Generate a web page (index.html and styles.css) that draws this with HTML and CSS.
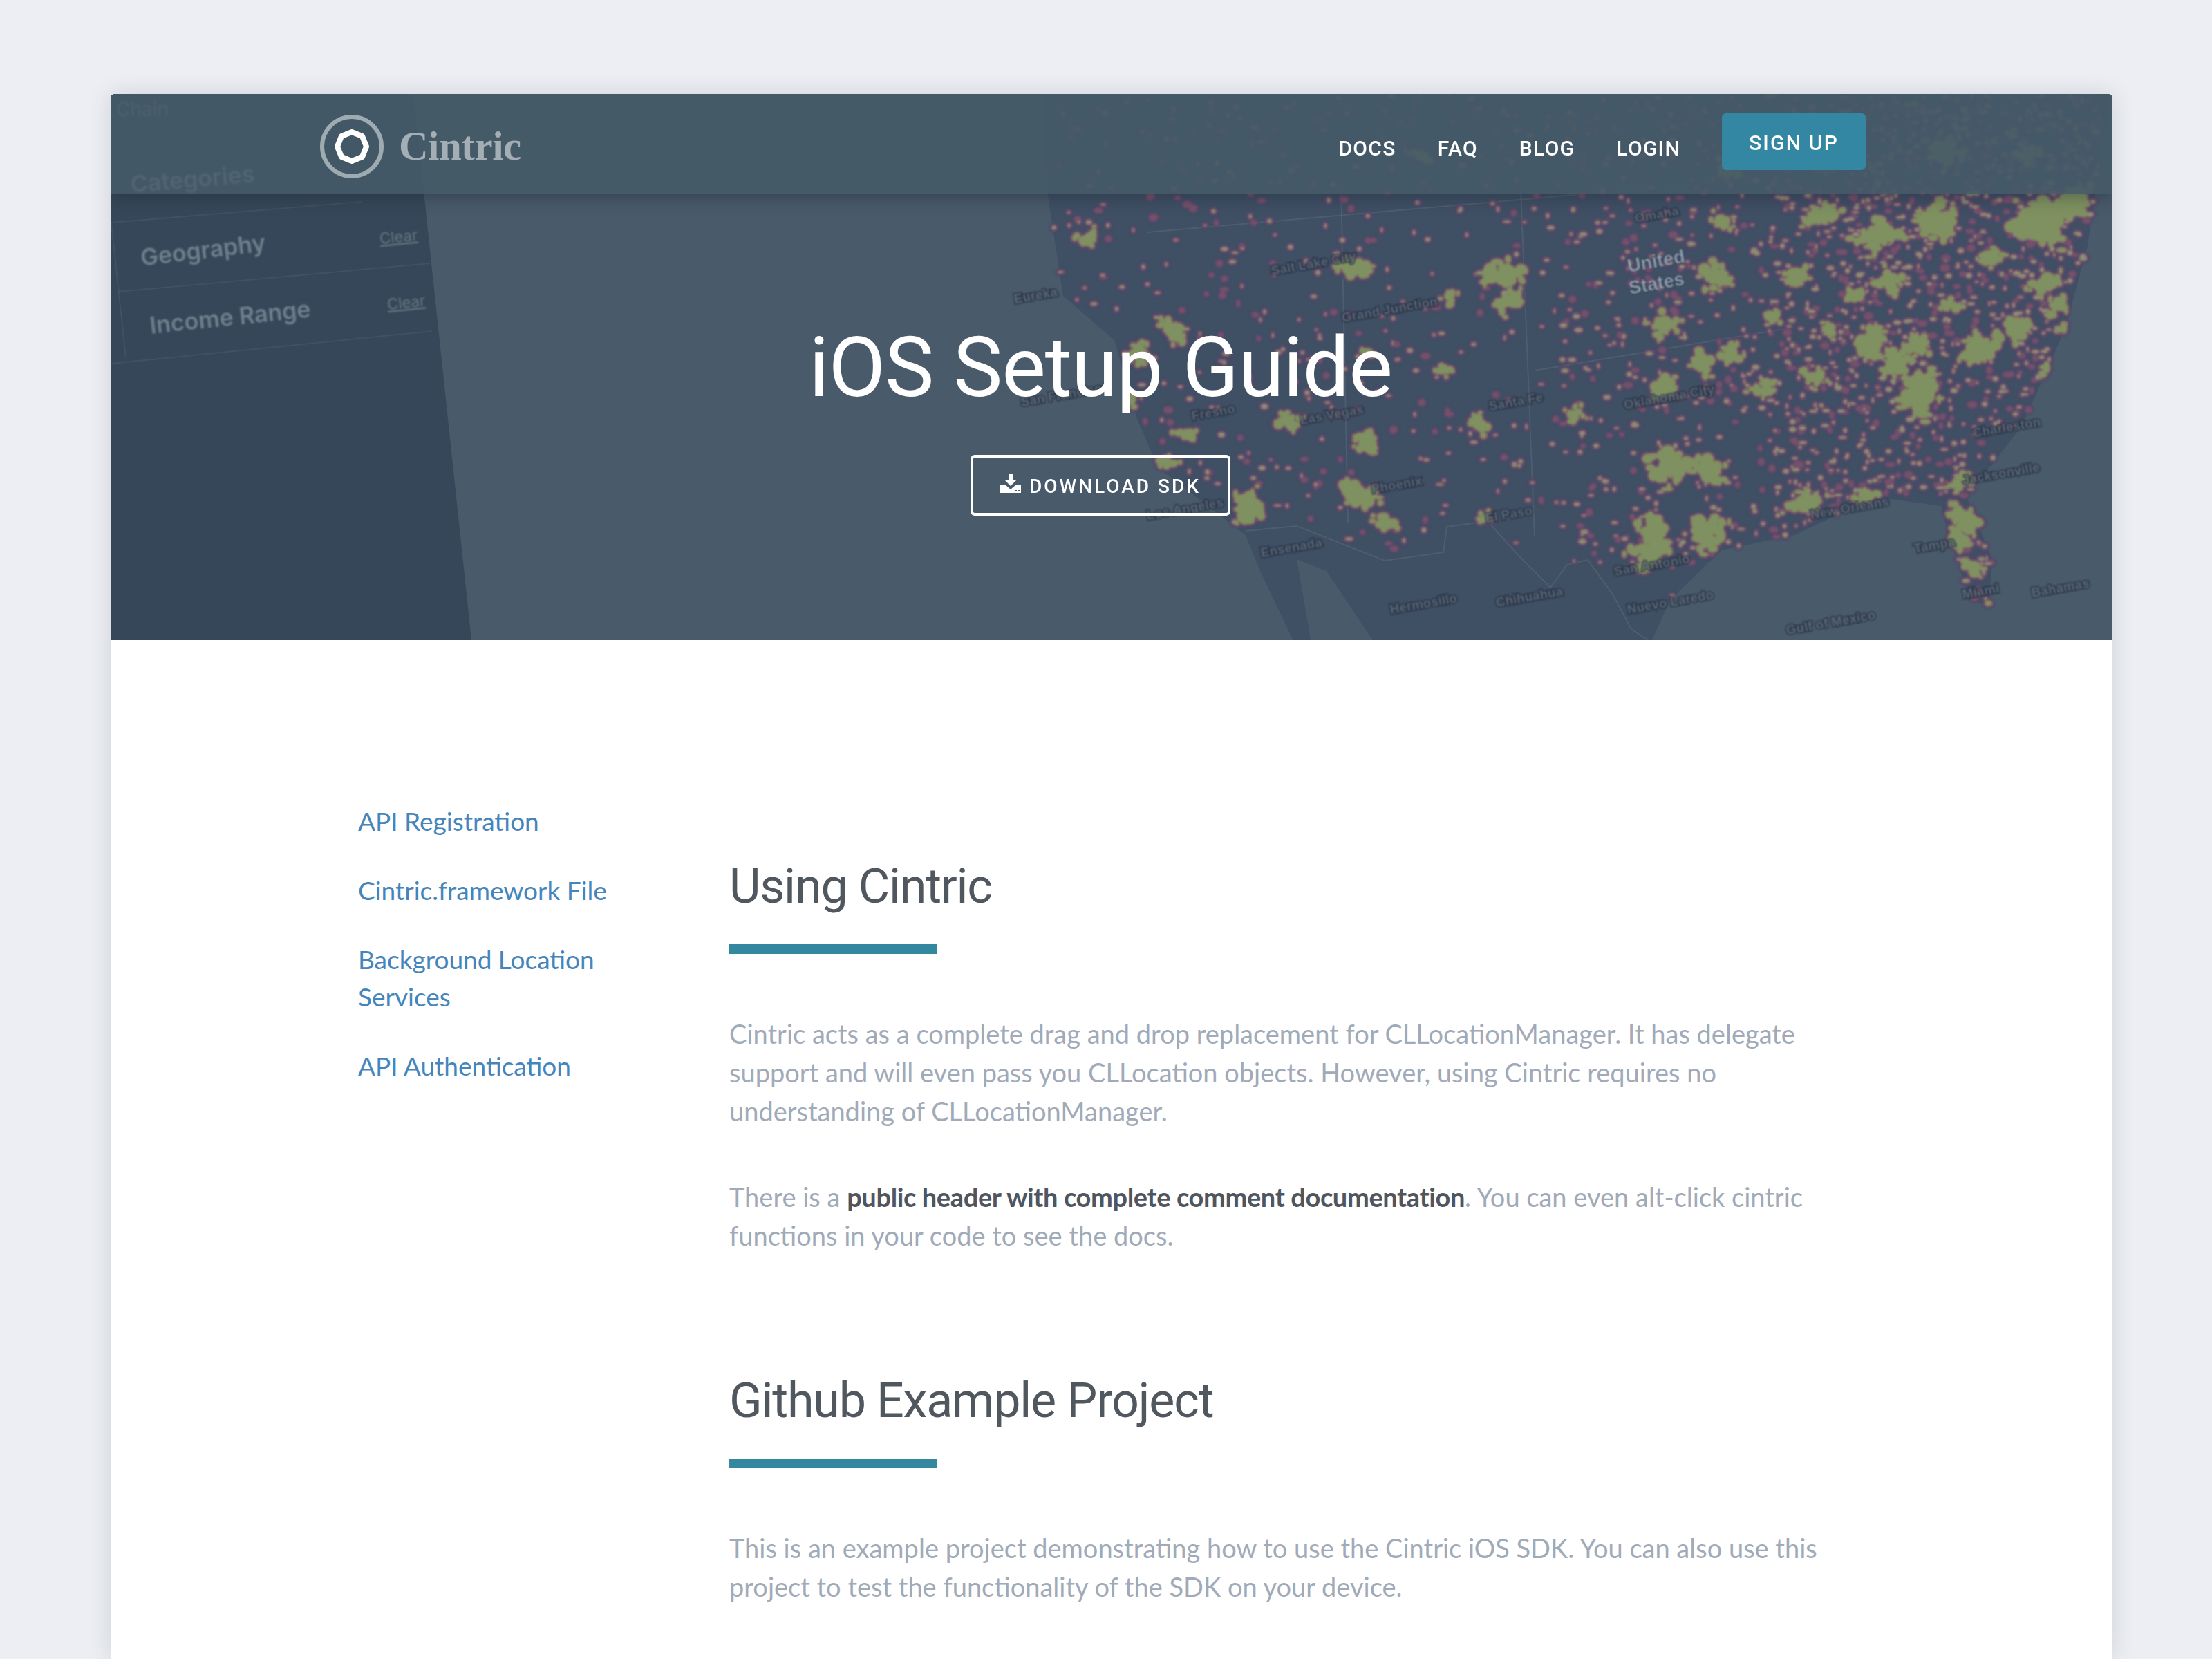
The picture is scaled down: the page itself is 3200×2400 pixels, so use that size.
FILE: index.html
```html
<!DOCTYPE html>
<html lang="en">
<head>
<meta charset="utf-8">
<title>iOS Setup Guide - Cintric</title>
<link rel="stylesheet" href="styles.css">
</head>
<body>
<div class="card">
  <header class="hero">
    <svg class="hero-art" viewBox="0 0 2896 790" width="2896" height="790" aria-hidden="true">
      <rect class="ocean" width="2896" height="790"/>
      <polygon id="land" class="land" points=""/>
      <polygon id="gulf" class="ocean" points=""/>
      <g class="borders">
        <polyline points="1642,632 1716,625 1843,675 1928,663 1933,626 1992,618 2040,671 2083,714 2107,681 2137,674 2173,724 2200,774 2224,790"/>
        <polyline points="1500,200 2300,130"/>
        <polyline points="1780,130 1790,620"/>
        <polyline points="2040,140 2060,640"/>
        <polyline points="2060,400 2420,340"/>
      </g>
      <g id="heat" class="heat"></g>
      <g class="map-labels">
        <text x="1308" y="303" transform="rotate(-10 1308 303)">Eureka</text>
        <text x="1680" y="262" transform="rotate(-10 1680 262)">Salt Lake City</text>
        <text x="1782" y="330" transform="rotate(-10 1782 330)">Grand Junction</text>
        <text x="2206" y="186" transform="rotate(-10 2206 186)">Omaha</text>
        <text class="country" x="2196" y="258" transform="rotate(-10 2196 258)">United</text>
        <text class="country" x="2198" y="290" transform="rotate(-10 2198 290)">States</text>
        <text x="1318" y="452" transform="rotate(-10 1318 452)">San Francisco</text>
        <text x="1565" y="472" transform="rotate(-10 1565 472)">Fresno</text>
        <text x="1722" y="478" transform="rotate(-10 1722 478)">Las Vegas</text>
        <text x="1995" y="458" transform="rotate(-10 1995 458)">Santa Fe</text>
        <text x="2190" y="456" transform="rotate(-10 2190 456)">Oklahoma City</text>
        <text x="1825" y="578" transform="rotate(-10 1825 578)">Phoenix</text>
        <text x="1500" y="616" transform="rotate(-10 1500 616)">Los Angeles</text>
        <text x="1990" y="620" transform="rotate(-10 1990 620)">El Paso</text>
        <text x="1665" y="670" transform="rotate(-10 1665 670)">Ensenada</text>
        <text x="1852" y="752" transform="rotate(-10 1852 752)">Hermosillo</text>
        <text x="2005" y="742" transform="rotate(-10 2005 742)">Chihuahua</text>
        <text x="2195" y="752" transform="rotate(-10 2195 752)">Nuevo Laredo</text>
        <text x="2176" y="697" transform="rotate(-10 2176 697)">San Antonio</text>
        <text x="2460" y="615" transform="rotate(-10 2460 615)">New Orleans</text>
        <text x="2610" y="664" transform="rotate(-10 2610 664)">Tampa</text>
        <text x="2680" y="730" transform="rotate(-10 2680 730)">Miami</text>
        <text x="2780" y="728" transform="rotate(-10 2780 728)">Bahamas</text>
        <text x="2425" y="782" transform="rotate(-10 2425 782)">Gulf of Mexico</text>
        <text x="2695" y="497" transform="rotate(-10 2695 497)">Charleston</text>
        <text x="2680" y="565" transform="rotate(-10 2680 565)">Jacksonville</text>
      </g>
      <polygon class="panel" points="0,0 438,0 522,790 0,790"/>
      <g class="panel-lines">
        <line x1="1" y1="186" x2="363" y2="156"/>
        <line x1="11" y1="286" x2="462" y2="245"/>
        <line x1="1" y1="390" x2="465" y2="343"/>
        <line x1="1" y1="186" x2="22" y2="382"/>
      </g>
      <g class="panel-text">
        <text class="faint" x="8" y="32">Chain</text>
        <text class="ghost" x="30" y="143" transform="rotate(-5 30 143)">Categories</text>
        <text class="group" x="45" y="249" transform="rotate(-7 45 249)">Geography</text>
        <text class="group" x="58" y="347" transform="rotate(-6 58 347)">Income Range</text>
        <text class="clear" x="390" y="217" transform="rotate(-6 390 217)">Clear</text>
        <text class="clear" x="401" y="312" transform="rotate(-6 401 312)">Clear</text>
      </g>
    </svg>

    <nav class="nav">
      <a class="brand" href="#">
        <svg class="brand-mark" viewBox="0 0 96 96" width="96" height="96" aria-hidden="true">
          <circle class="ring-outer" cx="48" cy="48" r="43"/>
          <polygon class="ring-inner" points="48,27 63,33 69,48 63,63 48,69 33,63 27,48 33,33"/>
        </svg>
        <span class="brand-name">Cintric</span>
      </a>
      <div class="nav-links">
        <a class="nav-link" href="#">DOCS</a>
        <a class="nav-link" href="#">FAQ</a>
        <a class="nav-link" href="#">BLOG</a>
        <a class="nav-link" href="#">LOGIN</a>
        <a class="signup" href="#">SIGN UP</a>
      </div>
    </nav>

    <div class="hero-body">
      <h1 class="hero-title">iOS Setup Guide</h1>
      <a class="download" href="#">
        <svg class="download-icon" viewBox="0 0 30 28" width="30" height="28" aria-hidden="true">
          <path d="M12 0h6v9h6l-9 9-9-9h6z"/>
          <path d="M0 17h8l7 6 7-6h8v11H0z"/>
          <rect class="dot" x="22" y="24" width="2" height="2"/>
          <rect class="dot" x="26" y="24" width="2" height="2"/>
        </svg>
        <span class="download-label">DOWNLOAD SDK</span>
      </a>
    </div>
  </header>

  <main class="content">
    <aside class="sidebar">
      <a href="#">API Registration</a>
      <a href="#">Cintric.framework File</a>
      <a href="#">Background Location Services</a>
      <a href="#">API Authentication</a>
    </aside>
    <article class="article">
      <section class="section">
        <h2>Using Cintric</h2>
        <div class="rule"></div>
        <p>Cintric acts as a complete drag and drop replacement for CLLocationManager. It has delegate support and will even pass you CLLocation objects. However, using Cintric requires no understanding of CLLocationManager.</p>
        <p>There is a <strong>public header with complete comment documentation</strong>. You can even alt-click cintric functions in your code to see the docs.</p>
      </section>
      <section class="section">
        <h2>Github Example Project</h2>
        <div class="rule"></div>
        <p>This is an example project demonstrating how to use the Cintric iOS SDK. You can also use this project to test the functionality of the SDK on your device.</p>
      </section>
    </article>
  </main>
</div>
<script src="map.js"></script>
</body>
</html>
```

FILE: styles.css
```css
* { box-sizing: border-box; }
html, body { margin: 0; height: 2400px; overflow: hidden; }
body { background: #eceef3; padding: 136px 144px 0 160px; font-family: "Lato", "Noto Sans", sans-serif; }
a { text-decoration: none; color: inherit; }

.card { background: #fff; height: 2264px; border-radius: 6px 6px 0 0; box-shadow: 0 0 32px rgba(60, 70, 90, .16); overflow: hidden; }

.hero { position: relative; height: 790px; overflow: hidden; color: #fff; font-family: "Roboto", sans-serif; }
.hero-art { position: absolute; left: 0; top: 0; display: block; }
.ocean { fill: #495a6b; }
.land { fill: #3f4f64; }
.borders { fill: none; stroke: rgba(255, 255, 255, .08); stroke-width: 2; }
.heat { filter: blur(1.4px); }
.map-labels text { font: 700 19px "Liberation Sans", sans-serif; fill: rgba(112, 126, 142, .65); stroke: rgba(32, 42, 58, .6); stroke-width: 4px; paint-order: stroke; filter: blur(.8px); }
.map-labels .country { font-size: 27px; fill: rgba(170, 185, 200, .75); stroke-width: 2px; }
.panel { fill: #37475a; }
.panel-lines line { stroke: rgba(255, 255, 255, .05); stroke-width: 2; }
.panel-text { filter: blur(1.3px); font-family: "Inter", sans-serif; }
.panel-text text { fill: #6f7f8c; }
.panel-text .group { font-size: 34px; font-weight: 600; }
.panel-text .ghost { font-size: 34px; font-weight: 600; fill: #b4c2cc; }
.panel-text .faint { font-size: 28px; fill: #8797a4; }
.panel-text .clear { font-size: 22px; fill: #66767f; text-decoration: underline; }

.nav { position: relative; height: 144px; display: flex; align-items: flex-start; justify-content: space-between; padding: 0 357px 0 301px; background: rgba(69, 90, 103, .9); box-shadow: 0 6px 22px rgba(20, 28, 40, .35); }
.brand { display: flex; align-items: center; gap: 20px; height: 152px; }
.brand-mark { display: block; }
.ring-outer { fill: none; stroke: #9eabb1; stroke-width: 6; }
.ring-inner { fill: none; stroke: #fff; stroke-width: 8; stroke-linejoin: round; }
.brand-name { font: 700 59px "Liberation Serif", serif; color: #a3afb5; letter-spacing: -.5px; margin-top: -2px; }
.nav-links { display: flex; align-items: flex-start; }
.nav-link { font-size: 30px; font-weight: 500; letter-spacing: 1.3px; line-height: 40px; margin: 59px 60px 0 0; color: #fff; }
.signup { width: 208px; height: 82px; margin-top: 28px; border-radius: 6px; background: #3387a2; font-size: 30px; font-weight: 500; letter-spacing: 2.2px; text-align: center; line-height: 86px; }

.hero-body { position: relative; display: flex; flex-direction: column; align-items: center; padding: 0 32px 0 0; }
.hero-title { margin: 182px 0 0; font-size: 120px; font-weight: 400; line-height: 140px; letter-spacing: -1px; }
.download { display: flex; align-items: center; justify-content: center; gap: 12px; width: 376px; height: 88px; margin-top: 56px; border: 4px solid #fff; border-radius: 6px; font-size: 28px; font-weight: 500; letter-spacing: 3px; }
.download-label { margin-top: 3px; }
.download-icon { fill: #fff; margin-top: -6px; }
.download-icon .dot { fill: #44566a; }

.content { display: grid; grid-template-columns: 537px 1590px; padding: 235px 0 0 358px; }
.sidebar { display: flex; flex-direction: column; gap: 46px; width: 400px; font-size: 37px; line-height: 54px; color: #4585bc; }
.article { padding-top: 71px; }
.section { margin-bottom: 161px; }
h2 { margin: 0; font: 400 70px/100px "Roboto", sans-serif; letter-spacing: -1.2px; color: #50575f; }
.rule { width: 300px; height: 14px; margin-top: 34px; background: #33879f; }
p { margin: 0; font-size: 38px; line-height: 56px; color: #a0aab8; }
.rule + p { margin-top: 87px; }
p + p { margin-top: 68px; }
strong { font-weight: 700; letter-spacing: -.37px; color: #4f5660; }
```

FILE: map.js
```js
(function () {
  var seed = 20240611;
  function rnd() { seed = (seed * 1664525 + 1013904223) >>> 0; return seed / 4294967296; }
  function P(z) { return [z[0] * 1.0587 + 1240, z[1] * 0.4274 + 134]; }

  var us = [[100,-320],[110,30],[130,370],[200,520],[230,780],[260,950],[380,1180],[450,1165],[570,1235],[650,1210],[655,1150],[710,1130],[790,1330],[850,1265],[890,1320],[930,1530],[960,1400],[1030,1230],[1130,1180],[1240,1050],[1330,1080],[1340,1180],[1370,1400],[1395,1420],[1400,1260],[1365,1050],[1440,810],[1500,480],[1530,200],[1560,-320]].map(P);
  var land = [[100,-320],[110,30],[130,370],[200,520],[230,780],[260,950],[380,1180],[400,1300],[450,1560],[930,1560],[960,1400],[1030,1230],[1130,1180],[1240,1050],[1330,1080],[1340,1180],[1370,1400],[1395,1420],[1400,1260],[1365,1050],[1440,810],[1500,480],[1530,200],[1560,-320]].map(P);
  var gulf = [[450,1260],[490,1300],[560,1560],[470,1560]].map(P);
  function pts(a) { return a.map(function (p) { return p[0].toFixed(0) + ',' + p[1].toFixed(0); }).join(' '); }
  document.getElementById('land').setAttribute('points', pts(land));
  document.getElementById('gulf').setAttribute('points', pts(gulf));

  function inside(x, y, poly) {
    var c = false;
    for (var i = 0, j = poly.length - 1; i < poly.length; j = i++) {
      var a = poly[i], b = poly[j];
      if ((a[1] > y) !== (b[1] > y) && x < (b[0] - a[0]) * (y - a[1]) / (b[1] - a[1]) + a[0]) c = !c;
    }
    return c;
  }

  var clusters = [[165,180,.8],[525,270,1.1],[730,290,1.4],[740,390,1],[660,370,.7],[280,490,1.1],[235,560,1],[215,720,1.1],[300,830,.8],[440,800,.9],[545,870,.9],[535,1040,1.4],[570,1140,1],[380,1080,1.5],[270,940,.8],[705,1130,.7],[700,800,.9],[830,760,.7],[950,680,1.2],[1020,300,1.3],[1135,310,1.2],[1160,90,1.1],[1245,160,1.5],[1320,110,1.6],[1460,130,2],[1500,60,1.7],[950,470,.9],[1000,600,1.2],[1040,560,1.1],[1090,680,.9],[960,930,1.8],[1010,960,1.2],[940,1160,1.5],[1010,1170,1.5],[930,1250,1.2],[1140,1060,1.2],[1230,1050,1],[1235,530,1.4],[1300,700,1.7],[1380,540,1.4],[1430,480,1.2],[1300,530,1],[1270,600,1.2],[1155,640,.9],[1360,1000,.9],[1360,1130,1.2],[1350,1200,1.2],[1370,1300,.9],[1385,1420,.6],[1470,330,1],[1490,400,.9],[1260,320,1.1],[1180,90,.8],[1040,-60,1],[1130,-150,1],[1330,-120,1.2],[1450,-100,1],[1030,120,.8],[620,-100,.7],[1400,240,.9],[1180,480,.7],[1210,370,.7],[1100,450,.7],[1340,400,.8],[650,620,.6],[545,560,.5],[1500,480,.6],[1475,620,.6]];

  var green = [];

  function pushLobe(x, y, len, ang, w) {
    var steps = Math.max(3, Math.round(len / 5));
    for (var s = 0; s < steps; s++) {
      var t = s / (steps - 1) - .5;
      var taper = 1 - Math.abs(t) * 1.1;
      var px = x + Math.cos(ang) * len * t + (rnd() - .5) * w;
      var py = y + Math.sin(ang) * len * t * .8 + (rnd() - .5) * w * .8;
      if (!inside(px, py, us)) continue;
      green.push([px, py, (2.5 + rnd() * w * .6) * taper + 1.2, (2.5 + rnd() * w * .55) * taper + 1.2]);
    }
  }

  clusters.forEach(function (c) {
    var p = P(c), k = c[2] * 1.12, lobes = 2 + Math.round(k * 1.6);
    for (var i = 0; i < lobes; i++) {
      var a = rnd() * 6.283, off = rnd() * 9 * k;
      pushLobe(p[0] + Math.cos(a) * off, p[1] + Math.sin(a) * off * .8, (16 + rnd() * 26) * k, rnd() * 6.283, 10 * k);
    }
  });

  function density(x, y) {
    var d = x < 2100 ? 0.16 : x < 2400 ? 0.42 : 1;
    if (y > 700 && x < 2550) d *= .35;
    if (x < 1500) d *= .8;
    return d;
  }
  var dots = [], tries = 0;
  while (dots.length < 2100 && tries++ < 60000) {
    var x = 1340 + rnd() * 1540, y = rnd() * 790;
    if (!inside(x, y, us) || rnd() > density(x, y)) continue;
    var w = 1.2 + rnd() * 2.4, h = 1.2 + rnd() * 2.4;
    if (rnd() < .3) w += 2;
    dots.push([x, y, w, h]);
  }

  var parts = [];
  function add(list, grow, fill) {
    list.forEach(function (c) {
      parts.push('<ellipse cx="' + c[0].toFixed(1) + '" cy="' + c[1].toFixed(1) + '" rx="' + (c[2] + grow).toFixed(1) + '" ry="' + (c[3] + grow).toFixed(1) + '" fill="' + fill + '"/>');
    });
  }
  add(dots, 4.5, '#504868');
  add(green, 4.5, '#504868');
  add(dots, 2, '#74506a');
  add(green, 2, '#7c5468');
  add(dots.filter(function () { return rnd() < .7; }), 0, '#8a8e74');
  add(green, 0, '#7f9160');
  document.getElementById('heat').innerHTML = parts.join('');
})();
```
